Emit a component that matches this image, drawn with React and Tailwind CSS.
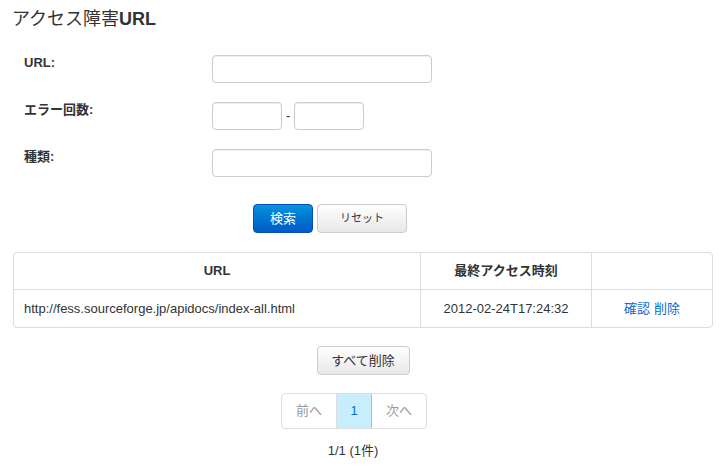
import React from "react";

const font = { fontFamily: '"Liberation Sans", "Noto Sans CJK JP", sans-serif' };

function Input({ w }) {
  return (
    <div
      className={`h-[28px] ${w} rounded-[4px] border border-[#cccccc] bg-white shadow-[inset_0_1px_1px_rgba(0,0,0,0.075)]`}
    />
  );
}

function Row({ label, children, mb = "mb-[19px]" }) {
  return (
    <div className={`flex ${mb}`}>
      <div className="w-[200px] shrink-0 pl-[12px] text-[13px] font-bold leading-4 text-[#333]">{label}</div>
      <div className="flex items-center">{children}</div>
    </div>
  );
}

export default function App() {
  return (
    <div className="w-[720px] h-[469px] bg-white text-[#333] overflow-hidden" style={font}>
      <div className="pl-[12px] pt-[7px]">
        <h3 className="text-[18px] leading-6 font-normal text-[#333]">
          アクセス障害<span className="font-bold">URL</span>
        </h3>

        <div className="mt-[24px]">
          <Row label="URL:">
            <Input w="w-[220px]" />
          </Row>
          <Row label="エラー回数:">
            <Input w="w-[70px]" />
            <span className="mx-[4px] text-[13px] leading-4 text-[#333]">-</span>
            <Input w="w-[70px]" />
          </Row>
          <Row label="種類:" mb="mb-0">
            <Input w="w-[220px]" />
          </Row>
        </div>

        <div className="mt-[27px] ml-[241px] flex gap-[4px]">
          <button className="h-[29px] w-[60px] rounded-[4px] border border-[#0050b8] bg-gradient-to-b from-[#0a92dc] to-[#0458c8] text-[13px] text-white">
            検索
          </button>
          <button className="h-[29px] w-[90px] rounded-[4px] border border-[#cccccc] bg-gradient-to-b from-white to-[#e8e8e8] text-[11px] text-[#333]">
            リセット
          </button>
        </div>

        <div className="mt-[19px] ml-[1px] w-[700px] rounded-[4px] border border-[#dddddd] text-[13px]">
          <div className="flex h-[36px] items-center font-bold">
            <div className="flex h-full w-[406px] items-center justify-center">URL</div>
            <div className="flex h-full w-[171px] items-center justify-center border-l border-[#dddddd]">
              最終アクセス時刻
            </div>
            <div className="h-full flex-1 border-l border-[#dddddd]" />
          </div>
          <div className="flex h-[38px] items-center border-t border-[#dddddd]">
            <div className="flex h-full w-[406px] items-center pl-[10px]">
              http://fess.sourceforge.jp/apidocs/index-all.html
            </div>
            <div className="flex h-full w-[171px] items-center justify-center border-l border-[#dddddd]">
              2012-02-24T17:24:32
            </div>
            <div className="flex h-full flex-1 items-center justify-center gap-[4px] border-l border-[#dddddd] text-[#0a6bd0]">
              <span>確認</span>
              <span>削除</span>
            </div>
          </div>
        </div>

        <div className="mt-[18px] flex w-[702px] justify-center">
          <button className="h-[29px] w-[93px] rounded-[4px] border border-[#cccccc] bg-gradient-to-b from-white to-[#e8e8e8] text-[13px] text-[#333]">
            すべて削除
          </button>
        </div>
      </div>

      <div className="mt-[18px] flex w-[708px] justify-center">
        <div className="flex h-[36px] overflow-hidden rounded-[4px] border border-[#dddddd] text-[13px]">
          <div className="flex w-[54px] items-center justify-center text-[#999]">前へ</div>
          <div className="flex w-[36px] items-center justify-center border-l border-r border-[#dddddd] border-r-[#9ec3d8] bg-[#c8eefd] text-[#0a6bd0]">
            1
          </div>
          <div className="flex w-[54px] items-center justify-center text-[#999]">次へ</div>
        </div>
      </div>

      <div className="mt-[12px] flex w-[706px] justify-center text-[13px] leading-5 text-[#333]">1/1 (1件)</div>
    </div>
  );
}
